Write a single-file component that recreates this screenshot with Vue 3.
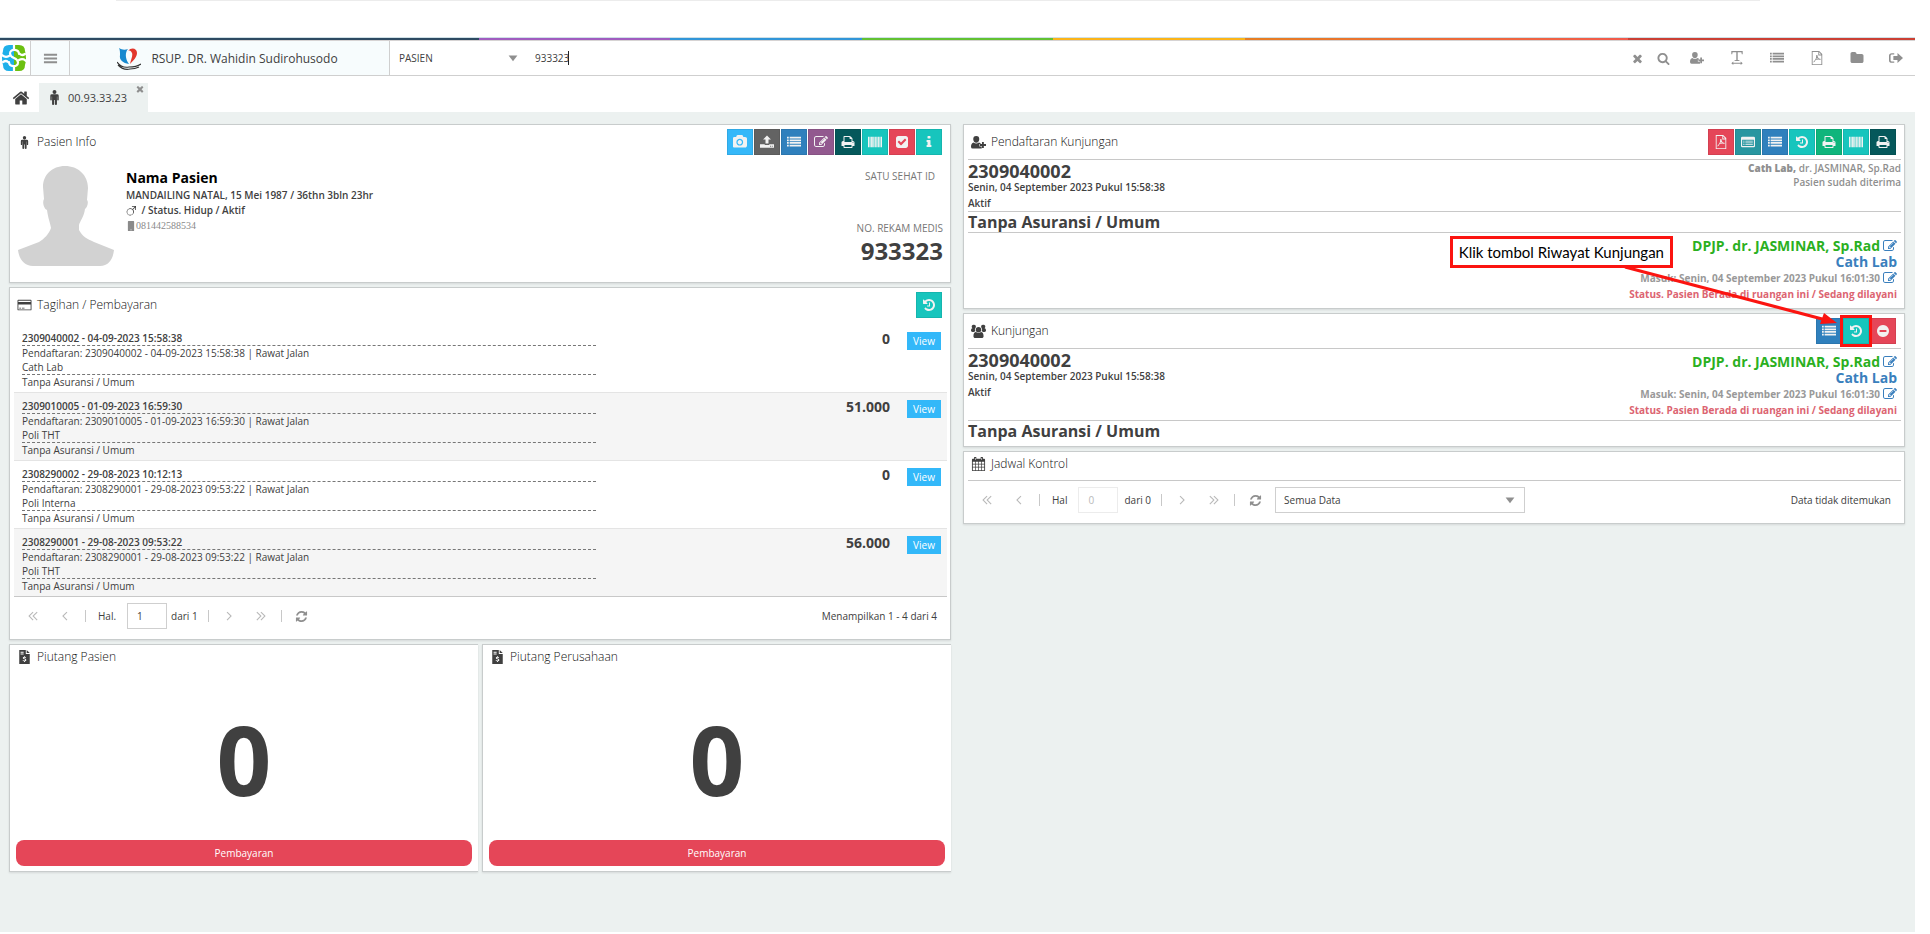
<script setup>
import { h, ref } from 'vue'

const icons = {
  home: [1792, 'M1472 992v480q0 26-19 45t-45 19h-384v-384h-256v384h-384q-26 0-45-19t-19-45v-480q0-1 .5-3t.5-3l575-474 575 474q1 2 1 6zm223-69l-62 74q-8 9-21 11h-3q-13 0-21-7l-692-577-692 577q-12 8-24 7-13-2-21-11l-62-74q-8-10-7-23.5t11-21.5l719-599q32-26 76-26t76 26l244 204v-195q0-14 9-23t23-9h192q14 0 23 9t9 23v408l219 182q10 8 11 21.5t-7 23.5z'],
  search: [1792, 'M1216 832q0-185-131.5-316.5t-316.5-131.5-316.5 131.5-131.5 316.5 131.5 316.5 316.5 131.5 316.5-131.5 131.5-316.5zm512 832q0 52-38 90t-90 38q-54 0-90-38l-343-342q-179 124-399 124-143 0-273.5-55.5t-225-150-150-225-55.5-273.5 55.5-273.5 150-225 225-150 273.5-55.5 273.5 55.5 225 150 150 225 55.5 273.5q0 220-124 399l343 343q37 37 37 90z'],
  times: [1792, 'M1490 1322q0 40-28 68l-136 136q-28 28-68 28t-68-28l-294-294-294 294q-28 28-68 28t-68-28l-136-136q-28-28-28-68t28-68l294-294-294-294q-28-28-28-68t28-68l136-136q28-28 68-28t68 28l294 294 294-294q28-28 68-28t68 28l136 136q28 28 28 68t-28 68l-294 294 294 294q28 28 28 68z'],
  camera: [1856, 'M896 672q119 0 203.5 84.5t84.5 203.5-84.5 203.5-203.5 84.5-203.5-84.5-84.5-203.5 84.5-203.5 203.5-84.5zm704-416q106 0 181 75t75 181v896q0 106-75 181t-181 75h-1408q-106 0-181-75t-75-181v-896q0-106 75-181t181-75h224l51-136q19-49 69.5-84.5t103.5-35.5h512q53 0 103.5 35.5t69.5 84.5l51 136h224zm-704 1152q185 0 316.5-131.5t131.5-316.5-131.5-316.5-316.5-131.5-316.5 131.5-131.5 316.5 131.5 316.5 316.5 131.5z'],
  check: [1792, 'M813 1299l614-614q19-19 19-45t-19-45l-102-102q-19-19-45-19t-45 19l-467 467-211-211q-19-19-45-19t-45 19l-102 102q-19 19-19 45t19 45l358 358q19 19 45 19t45-19zm851-883v960q0 119-84.5 203.5t-203.5 84.5h-960q-119 0-203.5-84.5t-84.5-203.5v-960q0-119 84.5-203.5t203.5-84.5h960q119 0 203.5 84.5t84.5 203.5z'],
  info: [1792, 'M1216 1344v128q0 26-19 45t-45 19h-512q-26 0-45-19t-19-45v-128q0-26 19-45t45-19h64v-384h-64q-26 0-45-19t-19-45v-128q0-26 19-45t45-19h384q26 0 45 19t19 45v576h64q26 0 45 19t19 45zm-128-1152v192q0 26-19 45t-45 19h-256q-26 0-45-19t-19-45v-192q0-26 19-45t45-19h256q26 0 45 19t19 45z'],
  minus: [1792, 'M1344 960v-128q0-26-19-45t-45-19h-768q-26 0-45 19t-19 45v128q0 26 19 45t45 19h768q26 0 45-19t19-45zm320-64q0 209-103 385.5t-279.5 279.5-385.5 103-385.5-103-279.5-279.5-103-385.5 103-385.5 279.5-279.5 385.5-103 385.5 103 279.5 279.5 103 385.5z'],
  history: [1792, 'M1664 896q0 156-61 298t-164 245-245 164-298 61q-172 0-327-72.5t-264-204.5q-7-10-6.5-22.5t8.5-20.5l137-138q10-9 25-9 16 2 23 12 73 95 179 147t225 52q104 0 198.5-40.5t163.5-109.5 109.5-163.5 40.5-198.5-40.5-198.5-109.5-163.5-163.5-109.5-198.5-40.5q-98 0-188 35.5t-160 101.5l137 138q31 30 14 69-17 40-59 40h-448q-26 0-45-19t-19-45v-448q0-42 40-59 39-17 69 14l130 129q107-101 244.5-156.5t284.5-55.5q156 0 298 61t245 164 164 245 61 298zm-640-288v448q0 14-9 23t-23 9h-320q-14 0-23-9t-9-23v-64q0-14 9-23t23-9h224v-352q0-14 9-23t23-9h64q14 0 23 9t9 23z'],
  print: [1792, 'M448 1536h896v-256h-896v256zm0-640h896v-384h-160q-40 0-68-28t-28-68v-160h-640v640zm1152 64q0-26-19-45t-45-19-45 19-19 45 19 45 45 19 45-19 19-45zm128 0v416q0 13-9.5 22.5t-22.5 9.5h-224v160q0 40-28 68t-68 28h-960q-40 0-68-28t-28-68v-160h-224q-13 0-22.5-9.5t-9.5-22.5v-416q0-79 56.5-135.5t135.5-56.5h64v-544q0-40 28-68t68-28h672q40 0 88 20t76 48l152 152q28 28 48 76t20 88v256h64q79 0 135.5 56.5t56.5 135.5z'],
  refresh: [1792, 'M1639 1056q0 5-1 7-64 268-268 434.5t-478 166.5q-146 0-282.5-55t-243.5-157l-129 129q-19 19-45 19t-45-19-19-45v-448q0-26 19-45t45-19h448q26 0 45 19t19 45-19 45l-137 137q71 66 161 102t187 36q134 0 250-65t186-179q11-17 53-117 8-23 30-23h192q13 0 22.5 9.5t9.5 22.5zm25-800v448q0 26-19 45t-45 19h-448q-26 0-45-19t-19-45 19-45l138-138q-148-137-349-137-134 0-250 65t-186 179q-11 17-53 117-8 23-30 23h-199q-13 0-22.5-9.5t-9.5-22.5v-7q65-268 270-434.5t480-166.5q146 0 284 55.5t245 156.5l130-129q19-19 45-19t45 19 19 45z'],
  folder: [1792, 'M1728 608v704q0 92-66 158t-158 66h-1216q-92 0-158-66t-66-158v-960q0-92 66-158t158-66h320q92 0 158 66t66 158v32h672q92 0 158 66t66 158z'],
  edit: [1792, 'M888 1184l116-116-152-152-116 116v56h96v96h56zm440-720q-16-16-33 1l-350 350q-17 17-1 33t33-1l350-350q17-17 1-33zm80 594v190q0 119-84.5 203.5t-203.5 84.5h-832q-119 0-203.5-84.5t-84.5-203.5v-832q0-119 84.5-203.5t203.5-84.5h832q63 0 117 25 15 7 18 23 3 17-9 29l-49 49q-14 14-32 8-23-6-45-6h-832q-66 0-113 47t-47 113v832q0 66 47 113t113 47h832q66 0 113-47t47-113v-126q0-13 9-22l64-64q15-15 35-7t20 29zm-96-738l288 288-672 672h-288v-288zm444 132l-92 92-288-288 92-92q28-28 68-28t68 28l152 152q28 28 28 68t-28 68z'],
  bars: [16, 'M1 3h14v2H1zM1 7h14v2H1zM1 11h14v2H1z'],
  male: [16, 'M8 0a2 2 0 1 1 0 4.2A2 2 0 0 1 8 0zM5.2 4.600h5.600Q12.500 4.600 12.500 6v4.400q0 .8-.8.8t-.8-.8V6.800h-.3v8.400q0 .8-1.100.8t-1.100-.8v-4.600h-.8v4.600q0 .8-1.100.8t-1.100-.8V6.800h-.3v3.600q0 .8-.8.8t-.8-.8V6q0-1.400 1.700-1.400z'],
  userPlus: [16, 'M5.600 1a3.300 3.300 0 0 1 3.200 3.500c0 1.900-1.400 3.700-3.200 3.700S2.400 6.400 2.400 4.500A3.300 3.300 0 0 1 5.600 1zM2.800 7.900c1.600 1.600 4 1.600 5.600 0 1.300.2 2 1 2.300 1.800H9v2.600h2.400v2.200H1.800Q0 14.500 0 12.500C0 10 .9 8.200 2.800 7.900zM11.700 7.500h2v2.200H16v2h-2.300v2.200h-2v-2.200H9.600v-2h2.100z'],
  users: [16, 'M8 3.200a2.900 2.900 0 1 1 0 5.800 2.900 2.900 0 0 1 0-5.800zM5.400 8.600c1.500 1.300 3.700 1.300 5.200 0 2 .1 2.800 2 2.800 4.500 0 1.300-.8 1.900-1.900 1.900h-7c-1.100 0-1.900-.6-1.900-1.900 0-2.500.8-4.400 2.800-4.500zM3.200.8a2.100 2.100 0 0 1 1.900 2.600A3.700 3.700 0 0 0 4.600 7.600Q3.800 7.900 3.200 8.500H1.600Q0 8.500 0 7.300C0 5.700.4 4.700 1.500 4.500A2.100 2.100 0 0 1 3.200.8zM12.800.8a2.100 2.100 0 0 0-1.900 2.600 3.700 3.700 0 0 1 .5 4.200q.8.3 1.400.9h1.600Q16 8.500 16 7.300c0-1.600-.4-2.600-1.500-2.800A2.100 2.100 0 0 0 12.800.8z'],
  list: [16, 'M0 2h2v2H0zM3 2h13v2H3zM0 5h2v2H0zM3 5h13v2H3zM0 8h2v2H0zM3 8h13v2H3zM0 11h2v2H0zM3 11h13v2H3z'],
  listAlt: [16, 'M1.500 2h13q1.500 0 1.500 1.500v9q0 1.500-1.500 1.500h-13Q0 14 0 12.500v-9Q0 2 1.500 2zM1.300 5.500v7h13.400v-7zM2.500 6.500h1.500v1H2.500zM5 6.500h8.500v1H5zM2.500 8.500h1.500v1H2.500zM5 8.500h8.500v1H5zM2.500 10.500h1.500v1H2.500zM5 10.500h8.500v1H5z'],
  barcode: [16, 'M0 2h1.500v12H0zM2 2h1v12H2zM3.500 2h2v12h-2zM6 2h1v12H6zM7.500 2h1.500v12H7.500zM9.500 2h1v12h-1zM11 2h1.500v12H11zM13 2h.8v12H13zM14.300 2H16v12h-1.700z'],
  upload: [16, 'M8 .5l4.500 4.700h-2.800v4.600H6.300V5.200H3.500zM0 10.500h5.200q.3 1 1.300 1h3q1 0 1.300-1H16v4H0zM11.500 12.300v1h1v-1zM13.500 12.300v1h1v-1z'],
  card: [16, 'M1 2h14q1 0 1 1v10q0 1-1 1H1q-1 0-1-1V3q0-1 1-1zM1 3v1.500h14V3zM1 7.500V13h14V7.500zM2 11h2v1H2zM5 11h3v1H5z'],
  invoice: [16, 'M2 0h7.500v4.500H14V16H2zM10.500 0L14 3.500h-3.500zM3.500 2v1H7V2zM3.500 4v1H7V4zM7.500 7v.8Q6 8 6 9.200q0 1.100 2 1.500.9.200.9.700t-.9.500q-1 0-1.700-.6l-.5 1q.7.500 1.700.6v.8h1v-.8q1.600-.2 1.600-1.500 0-1.200-1.900-1.600-1-.2-1-.6t.7-.4q.8 0 1.400.4l.4-1Q9.200 7.900 8.500 7.800V7z'],
  mobile: [16, 'M4 0h8q1 0 1 1v14q0 1-1 1H4q-1 0-1-1V1q0-1 1-1zM7.200 13.400v1.400h1.600v-1.400z'],
  mars: [16, 'M9.500 0H16v6.500h-1.200V2.200l-3.400 3.500a5.800 5.800 0 1 1-.9-.9L14 1.200H9.500zM6.700 4.700a4.700 4.700 0 1 0 0 9.400 4.700 4.700 0 0 0 0-9.400z'],
  textWidth: [16, 'M1.500 0h13v3.800h-1L13 1.300H8.800v8.900l2 .4v.8H5.200v-.8l2-.4V1.300H3L2.500 3.800h-1zM1.500 14l2.300-2v1.500h8.400V12l2.300 2-2.300 2v-1.500H3.800V16z'],
  pdf: [16, 'M2 0h8.500L14 3.500V16H2zM3 1v14h10V5H9.500V1zM10.500 1.400V4h2.200zM7.200 4.500h1.200q.4 2.700 1.600 4 2.300 0 2.300.9 0 1.100-2.600.2-1.800.2-3.200.8-1.300 2.800-2.500 2.800-.6-.9 1.700-2.800Q7.300 7.900 7.200 4.500zM8 7.700l-.8 1.800 1.700-.4z'],
  signOut: [16, 'M6 2.500v1.500H3.300q-1.500 0-1.500 1.500v5q0 1.500 1.500 1.500H6v1.500H3.300Q0 13.500 0 10.500v-5q0-3 3.300-3zM9.700 2.200L16 8l-6.300 5.800v-3.500H5V5.700h4.700z'],
  calendar: [16, 'M3 0h2.500v2h5V0H13v2h1.500q1 0 1 1v12q0 1-1 1h-13q-1 0-1-1V3q0-1 1-1H3zM4 1v2.500h.6V1zM11.400 1v2.500h.6V1zM1.500 5.500v2.300H4V5.500zM4.800 5.500v2.300h2.800V5.500zM8.400 5.500v2.300h2.800V5.500zM12 5.500v2.300h2.500V5.500zM1.500 8.600v2.600H4V8.600zM4.800 8.600v2.600h2.800V8.600zM8.400 8.600v2.600h2.800V8.600zM12 8.600v2.600h2.500V8.600zM1.500 12v3H4v-3zM4.800 12v3h2.800v-3zM8.400 12v3h2.800v-3zM12 12v3h2.500v-3z'],
  left: [16, 'M10.500 1l1.300 1.200L6 8l5.800 5.800-1.300 1.200-7-7z'],
  right: [16, 'M5.500 1L4.200 2.200 10 8l-5.800 5.800 1.300 1.200 7-7z'],
  first: [16, 'M7.500 1l1.300 1.200L3 8l5.800 5.800L7.500 15l-7-7zM14 1l1.300 1.200L9.500 8l5.800 5.800L14 15 7 8z'],
  last: [16, 'M8.500 1L7.200 2.200 13 8l-5.800 5.800L8.500 15l7-7zM2 1L.7 2.200 6.500 8 .7 13.800 2 15l7-7z'],
  caret: [16, 'M1 4h14l-7 9z'],
}

const Icon = (props) =>
  h('svg', { viewBox: `0 0 ${icons[props.n][0]} ${icons[props.n][0]}`, 'aria-hidden': 'true' }, [
    h('path', { d: icons[props.n][1], fill: 'currentColor', 'fill-rule': 'evenodd' }),
  ])
Icon.props = ['n']

const category = ref('PASIEN')
const keyword = ref('933323')
const page = ref('1')
const controlPage = ref('0')
const filter = ref('Semua Data')

const topTools = [
  ['userPlus', 'Pasien baru'], ['textWidth', 'Teks'], ['list', 'Daftar'],
  ['pdf', 'Dokumen'], ['folder', 'Berkas'], ['signOut', 'Keluar'],
]
const patientTools = [
  ['camera', 'sky', 'Foto'], ['upload', 'gray', 'Unggah'], ['list', 'blue', 'Daftar'],
  ['edit', 'purple', 'Ubah'], ['print', 'dark', 'Cetak'], ['barcode', 'teal', 'Barcode'],
  ['check', 'red', 'Verifikasi'], ['info', 'teal', 'Info'],
]
const registrationTools = [
  ['pdf', 'red', 'Dokumen'], ['listAlt', 'cyan', 'Rincian'], ['list', 'blue', 'Daftar'],
  ['history', 'teal', 'Riwayat'], ['print', 'green', 'Cetak bukti'], ['barcode', 'teal', 'Barcode'],
  ['print', 'dark', 'Cetak'],
]
const bills = [
  { id: '2309040002 - 04-09-2023 15:58:38', reg: '2309040002 - 04-09-2023 15:58:38', room: 'Cath Lab', total: '0' },
  { id: '2309010005 - 01-09-2023 16:59:30', reg: '2309010005 - 01-09-2023 16:59:30', room: 'Poli THT', total: '51.000' },
  { id: '2308290002 - 29-08-2023 10:12:13', reg: '2308290001 - 29-08-2023 09:53:22', room: 'Poli Interna', total: '0' },
  { id: '2308290001 - 29-08-2023 09:53:22', reg: '2308290001 - 29-08-2023 09:53:22', room: 'Poli THT', total: '56.000' },
]
const debts = ['Piutang Pasien', 'Piutang Perusahaan']
</script>

<template>
  <div class="page">
    <div class="window-edge"></div>
    <div class="app">
      <div class="rainbow"></div>
      <header class="topbar">
        <a class="brand" href="#" aria-label="SIMRS">
          <svg viewBox="0 0 24 26" aria-hidden="true">
            <path d="M7 0h5v26H7Q1 26 1 20 0 17 0 13T1 6Q1 0 7 0z" fill="#1fb0ea" />
            <path d="M12 0h5q6 0 6 6 1 3 1 7t-1 7q0 6-6 6h-5z" fill="#6cc010" />
            <g fill="none" stroke="#fff" stroke-width="2.200" stroke-linecap="round">
              <path d="M17 9C17 4 8 3 8 8.500S16 12 16 17.500 7 22 7 17" />
              <path d="M12 0v4M12 22v4M0 10q3 3 7 1M24 16q-3-3-7-1" />
              <path d="M1 17q3-2 5 0M23 9q-3 2-5 0" />
            </g>
          </svg>
        </a>
        <button class="menu" aria-label="Menu"><Icon n="bars" class="i15" /></button>
        <div class="hospital">
          <svg class="crest" viewBox="0 0 24 23" aria-hidden="true">
            <path d="M2 0c3 2 6 2 9 1-3 3-3 10 1 15C6 15 2 12 3 7 3 4 3 2 2 0z" fill="#1789cf" />
            <path d="M11 3c3-4 9-3 9 2 0 4-4 8-7 11 1-5 3-8 2-11-1-2-2-3-4-2z" fill="#e2372c" />
            <path d="M0 14c3 4 7 6 12 5 5 0 9-1 12-3M1 17c4 4 8 5 12 4 4 0 7-1 9-2" fill="none" stroke="#333" stroke-width="1.200" />
          </svg>
          <span>RSUP. DR. Wahidin Sudirohusodo</span>
        </div>
        <label class="category">
          <select v-model="category" aria-label="Kategori pencarian"><option>PASIEN</option></select>
          <Icon n="caret" class="i10 muted" />
        </label>
        <input class="keyword" v-model="keyword" type="text" aria-label="Kata kunci" />
        <div class="tools">
          <button class="tight" aria-label="Hapus"><Icon n="times" class="i13" /></button>
          <button class="search" aria-label="Cari"><Icon n="search" class="i13" /></button>
          <button v-for="t in topTools" :key="t[0]" :aria-label="t[1]"><Icon :n="t[0]" class="i14" /></button>
        </div>
      </header>

      <nav class="tabs">
        <a class="home" href="#" aria-label="Beranda"><Icon n="home" class="i18" /></a>
        <div class="tab">
          <Icon n="male" class="i15" />
          <a href="#">00.93.33.23</a>
          <button class="close" aria-label="Tutup tab"><Icon n="times" class="i10" /></button>
        </div>
      </nav>

      <main class="columns">
        <div class="column">
          <section class="panel">
            <div class="head">
              <Icon n="male" class="i13" /><h2>Pasien Info</h2>
              <div class="buttons">
                <button v-for="t in patientTools" :key="t[0]" class="sq" :class="t[1]" :aria-label="t[2]"><Icon :n="t[0]" class="i14" /></button>
              </div>
            </div>
            <div class="patient">
              <svg class="avatar" viewBox="0 0 96 100" aria-hidden="true">
                <path d="M47 0C60 0 70 9 70 22l-1 12c2 2 0 8-2 9-1 8-5 12-6 16v5c3 6 8 9 15 12l20 8c-1 9-5 16-14 16H15C6 100 1 93 0 84l21-8c5-3 10-8 12-14-1-6-3-10-4-18-3-1-5-8-3-11l-1-12C25 9 34 0 47 0z" fill="#d2d2d2" />
              </svg>
              <div class="bio">
                <h1>Nama Pasien</h1>
                <p>MANDAILING NATAL, 15 Mei 1987 / 36thn 3bln 23hr</p>
                <p><Icon n="mars" class="i10" /> / Status. Hidup / Aktif</p>
                <p class="phone"><Icon n="mobile" class="i10" />081442588534</p>
              </div>
              <div class="ids">
                <span class="satu">SATU SEHAT ID</span>
                <span>NO. REKAM MEDIS</span>
                <strong>933323</strong>
              </div>
            </div>
          </section>

          <section class="panel">
            <div class="head">
              <Icon n="card" class="i14" /><h2>Tagihan / Pembayaran</h2>
              <div class="buttons"><button class="sq teal" aria-label="Riwayat tagihan"><Icon n="history" class="i14" /></button></div>
            </div>
            <ul class="bills">
              <li v-for="b in bills" :key="b.id">
                <div class="bill">
                  <p class="dashed bold">{{ b.id }}</p>
                  <p>Pendaftaran: {{ b.reg }} | Rawat Jalan</p>
                  <p class="dashed">{{ b.room }}</p>
                  <p>Tanpa Asuransi / Umum</p>
                </div>
                <strong class="total">{{ b.total }}</strong>
                <button class="view">View</button>
              </li>
            </ul>
            <div class="pager">
              <button aria-label="Halaman pertama"><Icon n="first" class="i10" /></button>
              <button aria-label="Sebelumnya"><Icon n="left" class="i10" /></button>
              <i></i>
              <label for="bill-page">Hal.</label>
              <input id="bill-page" v-model="page" type="text" />
              <span class="of">dari 1</span>
              <i></i>
              <button aria-label="Berikutnya"><Icon n="right" class="i10" /></button>
              <button aria-label="Halaman terakhir"><Icon n="last" class="i10" /></button>
              <i></i>
              <button class="reload" aria-label="Muat ulang"><Icon n="refresh" class="i13" /></button>
              <span class="summary">Menampilkan 1 - 4 dari 4</span>
            </div>
          </section>

          <div class="debts">
            <section v-for="d in debts" :key="d" class="panel debt">
              <div class="head low"><Icon n="invoice" class="i14" /><h2>{{ d }}</h2></div>
              <div class="zero">0</div>
              <button class="pay">Pembayaran</button>
            </section>
          </div>
        </div>

        <div class="column">
          <section class="panel">
            <div class="head">
              <Icon n="userPlus" class="i15" /><h2>Pendaftaran Kunjungan</h2>
              <div class="buttons">
                <button v-for="t in registrationTools" :key="t[2]" class="sq" :class="t[1]" :aria-label="t[2]"><Icon :n="t[0]" class="i14" /></button>
              </div>
            </div>
            <div class="line visit">
              <div>
                <h3 class="number">2309040002</h3>
                <p class="when">Senin, 04 September 2023 Pukul 15:58:38</p>
                <p class="state">Aktif</p>
              </div>
              <div class="note"><p><b>Cath Lab,</b> dr. JASMINAR, Sp.Rad</p><p>Pasien sudah diterima</p></div>
            </div>
            <h3 class="line payer">Tanpa Asuransi / Umum</h3>
            <div class="line visit last">
              <div></div>
              <div class="doctor">
                <p class="dpjp">DPJP. dr. JASMINAR, Sp.Rad <a href="#" aria-label="Ubah DPJP"><Icon n="edit" class="i14" /></a></p>
                <p class="room">Cath Lab</p>
                <p class="entry">Masuk: Senin, 04 September 2023 Pukul 16:01:30 <a href="#" aria-label="Ubah waktu masuk"><Icon n="edit" class="i14" /></a></p>
                <p class="status">Status. Pasien Berada di ruangan ini / Sedang dilayani</p>
              </div>
            </div>
          </section>

          <section class="panel anchor">
            <div class="head">
              <Icon n="users" class="i15" /><h2>Kunjungan</h2>
              <div class="buttons">
                <button class="sq blue" aria-label="Daftar kunjungan"><Icon n="list" class="i14" /></button>
                <button class="sq teal marked" aria-label="Riwayat Kunjungan"><Icon n="history" class="i14" /></button>
                <button class="sq red" aria-label="Batalkan"><Icon n="minus" class="i14" /></button>
              </div>
            </div>
            <div class="line visit">
              <div>
                <h3 class="number">2309040002</h3>
                <p class="when">Senin, 04 September 2023 Pukul 15:58:38</p>
                <p class="state">Aktif</p>
              </div>
              <div class="doctor">
                <p class="dpjp">DPJP. dr. JASMINAR, Sp.Rad <a href="#" aria-label="Ubah DPJP"><Icon n="edit" class="i14" /></a></p>
                <p class="room">Cath Lab</p>
                <p class="entry">Masuk: Senin, 04 September 2023 Pukul 16:01:30 <a href="#" aria-label="Ubah waktu masuk"><Icon n="edit" class="i14" /></a></p>
                <p class="status">Status. Pasien Berada di ruangan ini / Sedang dilayani</p>
              </div>
            </div>
            <h3 class="line payer end">Tanpa Asuransi / Umum</h3>
            <svg class="arrow" viewBox="0 0 220 62" aria-hidden="true">
              <path d="M5 3L206 56" stroke="#fb1410" stroke-width="3" />
              <path d="M217 59l-17 1 4-11z" fill="#fb1410" />
            </svg>
            <div class="callout">Klik tombol Riwayat Kunjungan</div>
          </section>

          <section class="panel">
            <div class="head low spaced"><Icon n="calendar" class="i14" /><h2>Jadwal Kontrol</h2></div>
            <div class="line pager control">
              <button aria-label="Halaman pertama"><Icon n="first" class="i10" /></button>
              <button aria-label="Sebelumnya"><Icon n="left" class="i10" /></button>
              <i></i>
              <label for="control-page">Hal</label>
              <input id="control-page" v-model="controlPage" type="text" disabled />
              <span class="of">dari 0</span>
              <i></i>
              <button aria-label="Berikutnya"><Icon n="right" class="i10" /></button>
              <button aria-label="Halaman terakhir"><Icon n="last" class="i10" /></button>
              <i></i>
              <button class="reload" aria-label="Muat ulang"><Icon n="refresh" class="i13" /></button>
              <label class="filter">
                <select v-model="filter" aria-label="Filter data"><option>Semua Data</option></select>
                <Icon n="caret" class="i10 muted" />
              </label>
              <span class="summary">Data tidak ditemukan</span>
            </div>
          </section>
        </div>
      </main>
    </div>
  </div>
</template>

<style>
body { margin: 0; background: #fff; }
</style>

<style scoped>
.page { min-height: 100vh; box-sizing: border-box; padding: 0 15px 2px 0; display: flex; flex-direction: column; font: 10px/14px "Open Sans", "Noto Sans", sans-serif; color: #404040; }
.page * { box-sizing: border-box; }
h1, h2, h3, p, ul { margin: 0; padding: 0; }
button, input, select { font: inherit; color: inherit; margin: 0; padding: 0; border: 0; background: none; border-radius: 0; outline: none; }
select { appearance: none; }
a { color: inherit; text-decoration: none; }
svg { display: block; flex: none; }
.i10 { width: 10px; height: 10px; }
.i13 { width: 13px; height: 13px; }
.i14 { width: 14px; height: 14px; }
.i15 { width: 15px; height: 15px; }
.i18 { width: 18px; height: 18px; }
.muted { color: #8f8f8f; }

.window-edge { height: 37px; margin: 0 155px 0 116px; border-top: 1px solid #ececec; }
.app { flex: 1; display: flex; flex-direction: column; background: #ecf1f0; }
.rainbow { height: 4px; border-top: 1px solid #cfe0e6; border-bottom: 1px solid #d6d3d3; background: linear-gradient(90deg, #2d4a62 25%, #a05cbf 25% 35%, #3195d8 35% 45%, #62c132 45% 55%, #fbb41a 55% 65%, #e67e22 65%, #f15a4c 85%, #cb4034 85%); }
.topbar { display: flex; align-items: stretch; height: 35px; background: #fff; border-bottom: 1px solid #cfcfcf; }
.brand { width: 31px; padding: 4px 5px 4px 2px; border-right: 1px solid #cfcfcf; }
.brand svg { width: 24px; height: 26px; }
.menu { width: 39px; display: flex; align-items: center; justify-content: center; color: #8f8f8f; background: #f7fcfd; border-right: 1px solid #cfcfcf; }
.hospital { width: 320px; display: flex; align-items: center; justify-content: center; gap: 10px; padding: 2px 4px 0 0; font-size: 12px; background: #f7fcfd; border-right: 1px solid #cfcfcf; }
.crest { width: 24px; height: 23px; }
.category { width: 128px; display: flex; align-items: center; padding-left: 9px; }
.category select { flex: 1; height: 34px; }
.keyword { width: 34px; height: 14px; margin: 0 0 0 17px; align-self: center; border-right: 1px solid #222; }
.tools { display: flex; align-items: center; margin-left: auto; color: #8f8f8f; }
.tools button { width: 40px; height: 34px; display: flex; align-items: center; justify-content: center; }
.tools .tight { width: 24px; }
.tools .search { width: 28px; }
.tools button:last-child { width: 38px; }

.tabs { display: flex; height: 36px; padding-top: 7px; background: #fff; }
.home { width: 39px; padding-left: 2px; display: flex; align-items: center; justify-content: center; }
.tab { position: relative; display: flex; align-items: center; gap: 6px; padding: 0 21px 0 8px; background: #ecf1f0; font-size: 11px; }
.close { position: absolute; top: 1px; right: 3px; color: #8f8f8f; }

.columns { display: grid; grid-template-columns: 1fr 1fr; gap: 12px; padding: 12px 10px 12px 9px; align-items: start; }
.column { display: flex; flex-direction: column; gap: 4px; }
.panel { background: #fff; border: 1px solid #c8cccc; box-shadow: 0 1px 2px rgba(0, 0, 0, 0.1); }
.head { display: flex; align-items: center; height: 34px; padding: 0 8px 0 7px; gap: 5px; }
.head > svg { width: 15px; }
.head.low { height: 24px; }
.head.spaced { margin-bottom: 4px; }
h2 { font-size: 12px; font-weight: 300; line-height: 16px; color: #111; }
.buttons { margin-left: auto; display: flex; gap: 1px; }
.sq { width: 26px; height: 26px; display: flex; align-items: center; justify-content: center; color: #f2f2f2; border: 1px solid rgba(0, 0, 0, 0.08); }
.sky { background: #35b8f9; }
.gray { background: #636363; }
.blue { background: #2f80bd; }
.purple { background: #92598f; }
.dark { background: #05585b; }
.teal { background: #17c5bd; }
.red { background: #e54658; }
.cyan { background: #2896a0; }
.green { background: #0fb57c; }

.patient { display: flex; padding: 7px 7px 16px 8px; gap: 12px; }
.avatar { width: 96px; height: 100px; }
.bio { padding-top: 2px; }
.bio h1 { font-size: 14px; line-height: 20px; color: #000; }
.bio p { display: flex; align-items: center; gap: 3px; line-height: 15px; font-weight: 600; white-space: pre; }
.bio .phone { gap: 0; font-family: "Liberation Serif", serif; font-weight: 400; color: #8a8a8a; }
.ids { margin-left: auto; display: flex; flex-direction: column; align-items: flex-end; line-height: 20px; color: #777; }
.satu { margin: 0 8px 32px 0; }
.ids strong { font-size: 24px; line-height: 26px; color: #404040; }

.bills { list-style: none; margin: 3px 3px 0 4px; }
.bills li { display: flex; align-items: flex-start; padding: 6px 6px 3px 8px; border-bottom: 1px solid #e4e4e4; }
.bills li:nth-child(even) { background: #f5f5f5; }
.bills li:last-child { border-color: #c8c8c8; }
.bill { width: 62.500%; }
.dashed { border-bottom: 1px dashed #777; }
.bold { font-weight: 600; }
.total { margin-left: auto; font-size: 14px; line-height: 16px; }
.view { width: 34px; height: 18px; margin: 1px 0 0 17px; background: #33b8f9; color: #fff; }

.pager { display: flex; align-items: center; padding: 6px 13px 10px 7px; }
.pager.control { padding: 6px 10px 10px 3px; }
.pager button { width: 32px; height: 26px; display: flex; align-items: center; justify-content: center; color: #b9b9b9; }
.pager .reload { color: #8f8f8f; }
.pager i { width: 1px; height: 12px; margin: 0 4px; background: #c8c8c8; }
.pager label { margin: 0 11px 0 8px; }
.pager input { width: 40px; height: 26px; padding-left: 9px; border: 1px solid #cfcfcf; }
.pager input:disabled { border-color: #ececec; color: #b9b9b9; }
.of { margin: 0 6px 0 4px; }
.control .of { margin: 0 6px; }
.summary { margin-left: auto; }
.pager .filter { width: 250px; height: 26px; margin: 0 0 0 4px; padding: 0 9px 0 8px; display: flex; align-items: center; border: 1px solid #cfcfcf; }
.filter select { flex: 1; height: 24px; }

.debts { display: grid; grid-template-columns: 1fr 1fr; gap: 4px; }
.debt { display: flex; flex-direction: column; padding-bottom: 5px; border-right: 0; }
.zero { height: 171px; padding-top: 9px; display: flex; align-items: center; justify-content: center; font-size: 96px; line-height: 96px; font-weight: 700; }
.pay { height: 26px; margin: 0 6px; border-radius: 8px; background: #e54658; color: #fff; }

.line { margin: 0 3px 0 4px; border-top: 1px solid #c8c8c8; }
.visit { display: flex; justify-content: space-between; padding-top: 1px; }
.visit.last { padding-bottom: 4px; }
.number { font-size: 18px; line-height: 20px; }
.when { line-height: 12px; font-weight: 600; }
.state { margin-top: 2px; line-height: 16px; font-weight: 600; }
.note { text-align: right; color: #8f8f8f; font-weight: 600; }
.payer { font-size: 16px; line-height: 20px; }
.payer.end { padding-bottom: 5px; }
.doctor { padding: 4px 4px 2px 0; line-height: 16px; font-weight: 700; }
.doctor p { display: flex; align-items: center; justify-content: flex-end; gap: 3px; height: 16px; }
.doctor a { color: #3a7fbd; }
.dpjp { font-size: 14px; color: #2bb01f; }
.room { font-size: 14px; color: #3a7fbd; }
.entry { color: #999; }
.status { color: #dc6471; }

.anchor { position: relative; }
.marked { outline: 3px solid #fb1410; z-index: 1; }
.callout { position: absolute; top: -78px; right: 231px; padding: 2px 6px; border: 3px solid #fb1410; background: #fff; color: #000; font: 15px/22px Lato, sans-serif; white-space: nowrap; }
.arrow { position: absolute; top: -50px; right: 64px; width: 220px; height: 62px; z-index: 2; }
</style>
